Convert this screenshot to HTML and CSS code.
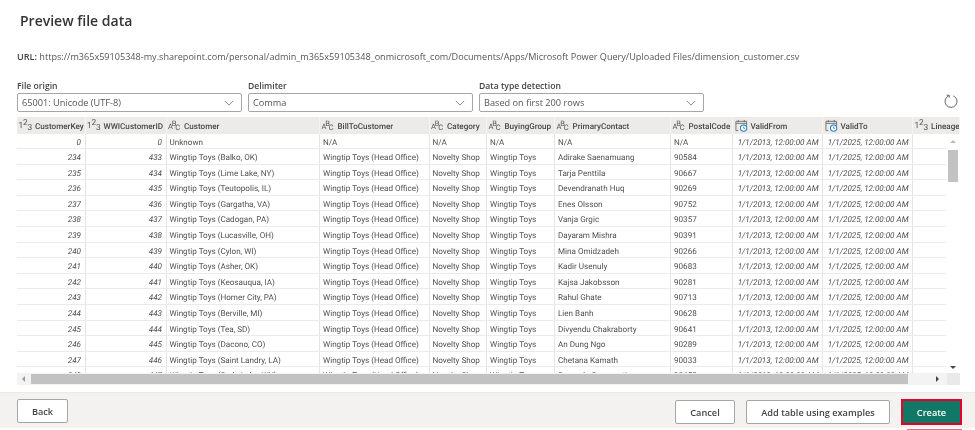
FILE: index.html
```html
<!DOCTYPE html>
<html lang="en">
<head>
<meta charset="utf-8">
<title>Preview file data</title>
<link rel="stylesheet" href="styles.css">
</head>
<body>
<svg class="defs" width="0" height="0" aria-hidden="true">
  <symbol id="cal" viewBox="0 0 14 14">
    <path d="M3.5 12.5H1V2.5h11.5v5M1 4.7h11.5M3.5 1v2.5M10 1v2.5" fill="none" stroke="#555" stroke-width=".8"/>
    <circle cx="9.3" cy="9.8" r="3.4" fill="#fff" stroke="#1f7fc4" stroke-width="1.1"/>
    <path d="M9.3 8v2h1.6" fill="none" stroke="#1f7fc4" stroke-width=".8"/>
  </symbol>
</svg>
<main class="page">
  <h1 class="title">Preview file data</h1>
  <p class="url"><span class="url-label">URL:</span> https://m365x59105348-my.sharepoint.com/personal/admin_m365x59105348_onmicrosoft_com/Documents/Apps/Microsoft Power Query/Uploaded Files/dimension_customer.csv</p>

  <div class="options">
    <div class="field">
      <label class="field-label">File origin</label>
      <div class="select"><span>65001: Unicode (UTF-8)</span><svg class="chev" viewBox="0 0 12 7"><path d="M1 1l5 5 5-5" fill="none" stroke="#666" stroke-width=".9"/></svg></div>
    </div>
    <div class="field">
      <label class="field-label">Delimiter</label>
      <div class="select"><span>Comma</span><svg class="chev" viewBox="0 0 12 7"><path d="M1 1l5 5 5-5" fill="none" stroke="#666" stroke-width=".9"/></svg></div>
    </div>
    <div class="field">
      <label class="field-label">Data type detection</label>
      <div class="select"><span>Based on first 200 rows</span><svg class="chev" viewBox="0 0 12 7"><path d="M1 1l5 5 5-5" fill="none" stroke="#666" stroke-width=".9"/></svg></div>
    </div>
    <svg class="refresh" viewBox="0 0 14 14"><path d="M4.6 1.9A6 6 0 1 0 9.4 1.9" fill="none" stroke="#555" stroke-width=".9"/><path d="M2.6 1.2h2.6v2.5" fill="none" stroke="#555" stroke-width=".9"/></svg>
  </div>

  <div class="grid">
    <div class="row head">
      <div class="hc"><span class="t123">1<sup>2</sup><sub>3</sub></span>CustomerKey</div>
      <div class="hc"><span class="t123">1<sup>2</sup><sub>3</sub></span>WWICustomerID</div>
      <div class="hc"><span class="tabc"><i>A</i><i class="b">B</i><i class="cc">C</i></span>Customer</div>
      <div class="hc"><span class="tabc"><i>A</i><i class="b">B</i><i class="cc">C</i></span>BillToCustomer</div>
      <div class="hc"><span class="tabc"><i>A</i><i class="b">B</i><i class="cc">C</i></span>Category</div>
      <div class="hc"><span class="tabc"><i>A</i><i class="b">B</i><i class="cc">C</i></span>BuyingGroup</div>
      <div class="hc"><span class="tabc"><i>A</i><i class="b">B</i><i class="cc">C</i></span>PrimaryContact</div>
      <div class="hc"><span class="tabc"><i>A</i><i class="b">B</i><i class="cc">C</i></span>PostalCode</div>
      <div class="hc"><svg class="tcal"><use href="#cal"/></svg>ValidFrom</div>
      <div class="hc"><svg class="tcal"><use href="#cal"/></svg>ValidTo</div>
      <div class="hc"><span class="t123">1<sup>2</sup><sub>3</sub></span>Lineage</div>
    </div>
    <div class="row"><div class="c n">0</div><div class="c n">0</div><div class="c">Unknown</div><div class="c">N/A</div><div class="c">N/A</div><div class="c">N/A</div><div class="c">N/A</div><div class="c">N/A</div><div class="c n">1/1/2013, 12:00:00 AM</div><div class="c n">1/1/2025, 12:00:00 AM</div><div class="c"></div></div>
    <div class="row"><div class="c n">234</div><div class="c n">433</div><div class="c">Wingtip Toys (Balko, OK)</div><div class="c">Wingtip Toys (Head Office)</div><div class="c">Novelty Shop</div><div class="c">Wingtip Toys</div><div class="c">Adirake Saenamuang</div><div class="c">90584</div><div class="c n">1/1/2013, 12:00:00 AM</div><div class="c n">1/1/2025, 12:00:00 AM</div><div class="c"></div></div>
    <div class="row"><div class="c n">235</div><div class="c n">434</div><div class="c">Wingtip Toys (Lime Lake, NY)</div><div class="c">Wingtip Toys (Head Office)</div><div class="c">Novelty Shop</div><div class="c">Wingtip Toys</div><div class="c">Tarja Penttila</div><div class="c">90667</div><div class="c n">1/1/2013, 12:00:00 AM</div><div class="c n">1/1/2025, 12:00:00 AM</div><div class="c"></div></div>
    <div class="row"><div class="c n">236</div><div class="c n">435</div><div class="c">Wingtip Toys (Teutopolis, IL)</div><div class="c">Wingtip Toys (Head Office)</div><div class="c">Novelty Shop</div><div class="c">Wingtip Toys</div><div class="c">Devendranath Huq</div><div class="c">90269</div><div class="c n">1/1/2013, 12:00:00 AM</div><div class="c n">1/1/2025, 12:00:00 AM</div><div class="c"></div></div>
    <div class="row"><div class="c n">237</div><div class="c n">436</div><div class="c">Wingtip Toys (Gargatha, VA)</div><div class="c">Wingtip Toys (Head Office)</div><div class="c">Novelty Shop</div><div class="c">Wingtip Toys</div><div class="c">Enes Olsson</div><div class="c">90752</div><div class="c n">1/1/2013, 12:00:00 AM</div><div class="c n">1/1/2025, 12:00:00 AM</div><div class="c"></div></div>
    <div class="row"><div class="c n">238</div><div class="c n">437</div><div class="c">Wingtip Toys (Cadogan, PA)</div><div class="c">Wingtip Toys (Head Office)</div><div class="c">Novelty Shop</div><div class="c">Wingtip Toys</div><div class="c">Vanja Grgic</div><div class="c">90357</div><div class="c n">1/1/2013, 12:00:00 AM</div><div class="c n">1/1/2025, 12:00:00 AM</div><div class="c"></div></div>
    <div class="row"><div class="c n">239</div><div class="c n">438</div><div class="c">Wingtip Toys (Lucasville, OH)</div><div class="c">Wingtip Toys (Head Office)</div><div class="c">Novelty Shop</div><div class="c">Wingtip Toys</div><div class="c">Dayaram Mishra</div><div class="c">90391</div><div class="c n">1/1/2013, 12:00:00 AM</div><div class="c n">1/1/2025, 12:00:00 AM</div><div class="c"></div></div>
    <div class="row"><div class="c n">240</div><div class="c n">439</div><div class="c">Wingtip Toys (Cylon, WI)</div><div class="c">Wingtip Toys (Head Office)</div><div class="c">Novelty Shop</div><div class="c">Wingtip Toys</div><div class="c">Mina Omidzadeh</div><div class="c">90266</div><div class="c n">1/1/2013, 12:00:00 AM</div><div class="c n">1/1/2025, 12:00:00 AM</div><div class="c"></div></div>
    <div class="row"><div class="c n">241</div><div class="c n">440</div><div class="c">Wingtip Toys (Asher, OK)</div><div class="c">Wingtip Toys (Head Office)</div><div class="c">Novelty Shop</div><div class="c">Wingtip Toys</div><div class="c">Kadir Usenuly</div><div class="c">90683</div><div class="c n">1/1/2013, 12:00:00 AM</div><div class="c n">1/1/2025, 12:00:00 AM</div><div class="c"></div></div>
    <div class="row"><div class="c n">242</div><div class="c n">441</div><div class="c">Wingtip Toys (Keosauqua, IA)</div><div class="c">Wingtip Toys (Head Office)</div><div class="c">Novelty Shop</div><div class="c">Wingtip Toys</div><div class="c">Kajsa Jakobsson</div><div class="c">90281</div><div class="c n">1/1/2013, 12:00:00 AM</div><div class="c n">1/1/2025, 12:00:00 AM</div><div class="c"></div></div>
    <div class="row"><div class="c n">243</div><div class="c n">442</div><div class="c">Wingtip Toys (Homer City, PA)</div><div class="c">Wingtip Toys (Head Office)</div><div class="c">Novelty Shop</div><div class="c">Wingtip Toys</div><div class="c">Rahul Ghate</div><div class="c">90713</div><div class="c n">1/1/2013, 12:00:00 AM</div><div class="c n">1/1/2025, 12:00:00 AM</div><div class="c"></div></div>
    <div class="row"><div class="c n">244</div><div class="c n">443</div><div class="c">Wingtip Toys (Berville, MI)</div><div class="c">Wingtip Toys (Head Office)</div><div class="c">Novelty Shop</div><div class="c">Wingtip Toys</div><div class="c">Lien Banh</div><div class="c">90628</div><div class="c n">1/1/2013, 12:00:00 AM</div><div class="c n">1/1/2025, 12:00:00 AM</div><div class="c"></div></div>
    <div class="row"><div class="c n">245</div><div class="c n">444</div><div class="c">Wingtip Toys (Tea, SD)</div><div class="c">Wingtip Toys (Head Office)</div><div class="c">Novelty Shop</div><div class="c">Wingtip Toys</div><div class="c">Divyendu Chakraborty</div><div class="c">90641</div><div class="c n">1/1/2013, 12:00:00 AM</div><div class="c n">1/1/2025, 12:00:00 AM</div><div class="c"></div></div>
    <div class="row"><div class="c n">246</div><div class="c n">445</div><div class="c">Wingtip Toys (Dacono, CO)</div><div class="c">Wingtip Toys (Head Office)</div><div class="c">Novelty Shop</div><div class="c">Wingtip Toys</div><div class="c">An Dung Ngo</div><div class="c">90289</div><div class="c n">1/1/2013, 12:00:00 AM</div><div class="c n">1/1/2025, 12:00:00 AM</div><div class="c"></div></div>
    <div class="row"><div class="c n">247</div><div class="c n">446</div><div class="c">Wingtip Toys (Saint Landry, LA)</div><div class="c">Wingtip Toys (Head Office)</div><div class="c">Novelty Shop</div><div class="c">Wingtip Toys</div><div class="c">Chetana Kamath</div><div class="c">90033</div><div class="c n">1/1/2013, 12:00:00 AM</div><div class="c n">1/1/2025, 12:00:00 AM</div><div class="c"></div></div>
    <div class="row"><div class="c n">248</div><div class="c n">447</div><div class="c">Wingtip Toys (Soda Lake, WY)</div><div class="c">Wingtip Toys (Head Office)</div><div class="c">Novelty Shop</div><div class="c">Wingtip Toys</div><div class="c">Sananda Saraswati</div><div class="c">90458</div><div class="c n">1/1/2013, 12:00:00 AM</div><div class="c n">1/1/2025, 12:00:00 AM</div><div class="c"></div></div>

    <div class="vbar">
      <span class="arrow up"></span>
      <span class="vthumb"></span>
      <span class="arrow down"></span>
    </div>
    <div class="hbar">
      <span class="arrow left"></span>
      <span class="hthumb"></span>
      <span class="arrow right"></span>
      <span class="corner"></span>
    </div>
  </div>

  <footer class="footer">
    <button class="btn back">Back</button>
    <div class="spacer"></div>
    <button class="btn cancel">Cancel</button>
    <button class="btn examples">Add table using examples</button>
    <button class="btn create">Create</button>
  </footer>
  <div class="red-frag"></div>
</main>
</body>
</html>
```

FILE: styles.css
```css
* { box-sizing: border-box; }
html, body { margin: 0; padding: 0; background: #fff; }
body { font-family: "Open Sans", "Noto Sans", sans-serif; color: #444; overflow: hidden; }
.defs { position: absolute; }
.page { width: 975px; height: 430px; display: flex; flex-direction: column; position: relative; overflow: hidden; filter: blur(.3px); }

.title { margin: 0; padding: 11px 0 0 20px; height: 49px; font-size: 14px; line-height: 20px; font-weight: 600; color: #333; }
.url { margin: 0 0 0 17px; height: 31px; font-size: 9.1px; line-height: 15px; color: #555; white-space: pre; }
.url-label { font-weight: 600; color: #444; }

.options { display: flex; gap: 6px; padding: 0 0 0 17px; height: 37px; position: relative; }
.field { width: 225px; display: flex; flex-direction: column; }
.field-label { font-size: 8.6px; line-height: 12px; height: 13px; font-weight: 600; color: #444; }
.select { height: 19px; border: 1px solid #a8a6a4; border-radius: 2px; display: flex; align-items: center; justify-content: space-between; padding: 0 5px 0 4px; font-size: 9.2px; color: #555; }
.chev { width: 10px; height: 6px; margin-right: 2px; }
.refresh { position: absolute; left: 944px; top: 14px; width: 14px; height: 14px; }

.grid { margin-left: 17px; width: 943px; height: 268px; position: relative; overflow: hidden; font-family: "Roboto", "Open Sans", sans-serif; text-rendering: geometricPrecision; }
.row { display: grid; grid-template-columns: 68.5px 81px 153.5px 109.5px 57.5px 68px 116px 62px 90px 90px 47px; height: 15.6px; border-bottom: 1.5px solid #ecebea; }
.row.head { height: 16.5px; background: #edebe9; border-bottom: 0; }
.hc { display: flex; align-items: center; padding: 1px 0 0 1.5px; font-size: 8.1px; font-weight: 500; color: #484644; white-space: nowrap; overflow: hidden; border-right: 1px solid #f6f5f4; }
.c { padding: 1px 3.5px 0 3px; font-size: 8.1px; line-height: 14.5px; color: #4f4f4f; white-space: nowrap; overflow: hidden; border-right: 1px solid #e6e5e4; }
.c.n { text-align: right; font-style: italic; }

.t123 { font-size: 8.4px; font-weight: 400; margin-right: 3px; color: #555; line-height: 10px; display: inline-block; letter-spacing: -.2px; }
.t123 sup { font-size: 8.4px; vertical-align: 3px; line-height: 0; }
.t123 sub { font-size: 8.4px; vertical-align: -2px; line-height: 0; }
.tabc { width: 13px; margin-right: 3px; flex: none; display: inline-flex; font-size: 7.5px; font-weight: 400; color: #555; line-height: 11px; }
.tabc i { font-style: normal; margin-right: -1.2px; position: relative; top: .5px; }
.tabc .b { top: -2px; }
.tabc .cc { top: 2px; }
.tcal { width: 13px; height: 13px; margin-right: 3px; flex: none; }

.vbar { position: absolute; right: 0; top: 16.5px; width: 14px; bottom: 11px; background: #fff; display: flex; flex-direction: column; align-items: center; padding-top: 6px; }
.vthumb { width: 10px; height: 32px; background: #c2c2c2; margin-top: 7px; }
.hbar { position: absolute; left: 0; right: 0; bottom: 0; height: 12px; background: #f3f3f3; display: flex; align-items: center; padding-left: 5px; }
.hthumb { width: 877px; height: 10px; background: #c2c2c2; margin-left: 6px; }
.corner { position: absolute; right: 0; top: 0; width: 13px; height: 12px; background: #e9e9e9; }

.arrow { width: 0; height: 0; border: 3px solid transparent; display: block; }
.arrow.up { border-top: 0; border-bottom: 3px solid #bbb; }
.arrow.down { border-bottom: 0; border-top: 3.5px solid #444; margin-top: auto; margin-bottom: 5px; }
.arrow.left { border-left: 0; border-right: 3px solid #999; }
.arrow.right { border-right: 0; border-left: 3.5px solid #444; margin-left: 28px; }

.footer { margin-top: 7px; height: 36px; background: #f3f2f1; border-top: 1px solid #ebe9e7; display: flex; align-items: flex-start; padding: 6px 13px 0 17px; gap: 11px; }
.spacer { flex: 1; }
.btn { height: 24px; font-family: inherit; font-size: 9.2px; font-weight: 600; color: #444; background: #fff; border: 1px solid #a8a6a4; border-radius: 2px; padding: 0; }
.back { width: 51px; }
.cancel { width: 60px; margin-top: 1px; }
.examples { width: 144px; margin-top: 1px; }
.create { width: 61px; height: 26px; color: #fff; background: #117865; border: 2px solid #e3002b; border-radius: 0; }
.red-frag { position: absolute; left: 907px; top: 429px; width: 55px; height: 1px; background: #e56a7c; }
```
